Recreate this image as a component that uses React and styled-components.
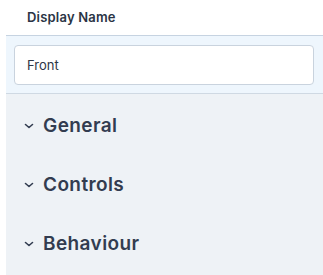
import React from 'react';
import styled, { createGlobalStyle } from 'styled-components';

const GlobalStyle = createGlobalStyle`
  body {
    margin: 0;
    background: #fff;
    font-family: Inter, "Noto Sans", sans-serif;
  }
`;

const Panel = styled.div`
  margin-left: 6px;
  width: 317px;
  height: 275px;
  display: flex;
  flex-direction: column;
  background: #eef2f6;
`;

const Header = styled.div`
  height: 36px;
  display: flex;
  align-items: center;
  padding-left: 21px;
  padding-bottom: 1px;
  box-sizing: border-box;
  background: #fff;
  border-bottom: 1px solid #c6d3e1;
  font-size: 13px;
  font-weight: 600;
  letter-spacing: 0.2px;
  color: #2b3445;
`;

const FieldRow = styled.div`
  padding: 9px 9px 8px 8px;
  background: #eef6fd;
  border-bottom: 1px solid #cfd9e3;
`;

const Input = styled.input`
  box-sizing: border-box;
  width: 100%;
  height: 40px;
  border: 1px solid #c9d3de;
  border-radius: 4px;
  background: #fff;
  padding: 0 12px;
  font-family: inherit;
  font-size: 13px;
  color: #2e3646;
  outline: none;
`;

const Sections = styled.div`
  display: flex;
  flex-direction: column;
  padding-top: 2px;
`;

const SectionHead = styled.div`
  height: 59px;
  display: flex;
  align-items: center;
  gap: 9px;
  padding-left: 18px;
  font-size: 19px;
  font-weight: 600;
  letter-spacing: 0.4px;
  color: #323c50;
`;

const Chevron = () => (
  <svg width="10" height="10" viewBox="0 0 10 10" fill="none">
    <path d="M1.5 3.5 L5 6.5 L8.5 3.5" stroke="#323c50" strokeWidth="1.6" strokeLinecap="round" strokeLinejoin="round" />
  </svg>
);

const sections = ['General', 'Controls', 'Behaviour'];

export default function App() {
  return (
    <>
      <GlobalStyle />
      <Panel>
        <Header>Display Name</Header>
        <FieldRow>
          <Input defaultValue="Front" />
        </FieldRow>
        <Sections>
          {sections.map((s) => (
            <SectionHead key={s}>
              <Chevron />
              {s}
            </SectionHead>
          ))}
        </Sections>
      </Panel>
    </>
  );
}
